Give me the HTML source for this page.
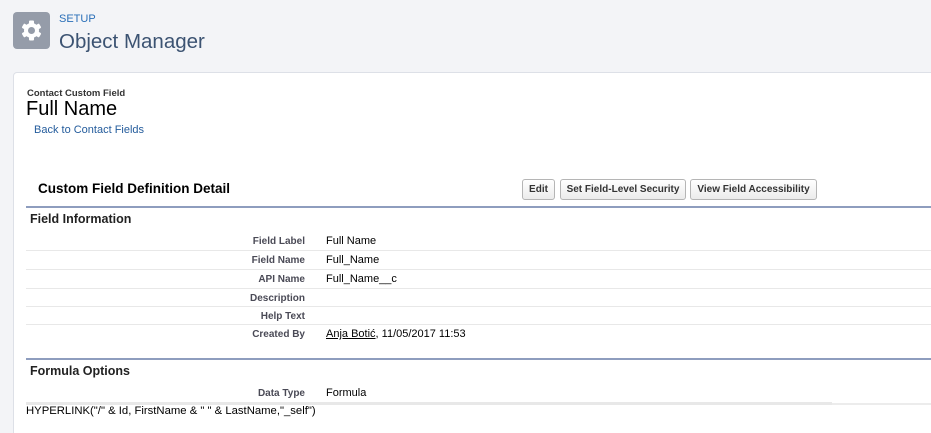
<!DOCTYPE html>
<html style="overflow:hidden;height:433px"><head><style>
body{margin:0;width:931px;height:433px;background:#f3f4f7;font-family:"Liberation Sans",Arial,sans-serif;position:relative;overflow:hidden}
.a{position:absolute;white-space:nowrap}
.card{left:13px;top:72px;width:930px;height:361px;background:#fff;border:1px solid #dde0e7;border-bottom:none;border-radius:4px 4px 0 0;box-sizing:border-box}
.lbl{font-size:10px;font-weight:bold;color:#4a4a56;text-align:right;width:200px;left:105px}
.val{font-size:11px;color:#000;left:326px}
.sep{left:26px;width:905px;height:1px;background:#e8e8e8}
.btn{top:179px;height:19px;border:1px solid #b5b5b5;border-radius:3px;background:linear-gradient(#fff,#ececec);font-size:10px;font-weight:bold;color:#333;line-height:19px;text-align:center}
.hd{left:30px;font-size:12.5px;font-weight:bold;color:#222}
.div{left:26px;width:905px;height:2px;background:#8e9dbe}
</style></head><body>
<div class="a" style="left:13px;top:12px;width:37px;height:37px;background:#959ca9;border-radius:4px">
<svg width="37" height="37" viewBox="0 0 37 37"><g transform="translate(18.5 18.5)" fill="#fff"><rect x="-2.5" y="-10" width="5" height="20" rx="1"/><rect x="-2.5" y="-10" width="5" height="20" rx="1" transform="rotate(60)"/><rect x="-2.5" y="-10" width="5" height="20" rx="1" transform="rotate(120)"/><circle r="7.5"/><circle r="3.5" fill="#959ca9"/></g></svg></div>
<div class="a" style="left:59px;top:13px;font-size:11px;color:#2a6fb8">SETUP</div>
<div class="a" style="left:59px;top:30px;font-size:20.5px;color:#3c5372">Object Manager</div>
<div class="a card"></div>
<div class="a" style="left:27px;top:88px;font-size:9.5px;font-weight:bold;color:#333">Contact Custom Field</div>
<div class="a" style="left:26px;top:98px;font-size:20px;color:#000">Full Name</div>
<div class="a" style="left:34px;top:124px;font-size:11px;color:#245c9c">Back to Contact Fields</div>
<div class="a" style="left:38px;top:181px;font-size:13.5px;font-weight:bold;color:#000">Custom Field Definition Detail</div>
<div class="a btn" style="left:522px;width:31px">Edit</div>
<div class="a btn" style="left:560px;width:124px">Set Field-Level Security</div>
<div class="a btn" style="left:690px;width:125px">View Field Accessibility</div>
<div class="a div" style="top:206px"></div>
<div class="a hd" style="top:212px">Field Information</div>
<div class="a lbl" style="top:236px">Field Label</div><div class="a val" style="top:235px">Full Name</div>
<div class="a sep" style="top:250px"></div>
<div class="a lbl" style="top:255px">Field Name</div><div class="a val" style="top:254px">Full_Name</div>
<div class="a sep" style="top:269px"></div>
<div class="a lbl" style="top:274px">API Name</div><div class="a val" style="top:273px">Full_Name__c</div>
<div class="a sep" style="top:288px"></div>
<div class="a lbl" style="top:293px">Description</div>
<div class="a sep" style="top:306px"></div>
<div class="a lbl" style="top:311px">Help Text</div>
<div class="a sep" style="top:324px"></div>
<div class="a lbl" style="top:329px">Created By</div><div class="a val" style="top:328px"><u>Anja Botić</u>, 11/05/2017 11:53</div>
<div class="a div" style="top:358px"></div>
<div class="a hd" style="top:364px">Formula Options</div>
<div class="a lbl" style="top:388px">Data Type</div><div class="a val" style="top:387px">Formula</div>
<div class="a" style="left:26px;top:402px;width:806px;height:3px;background:#e8e8e8"></div>
<div class="a" style="left:832px;top:403px;width:99px;height:2px;background:#ececec"></div>
<div class="a" style="left:26px;top:405px;font-size:11.3px;color:#000">HYPERLINK("/" &amp; Id, FirstName &amp; " " &amp; LastName,"_self")</div>
</body></html>
